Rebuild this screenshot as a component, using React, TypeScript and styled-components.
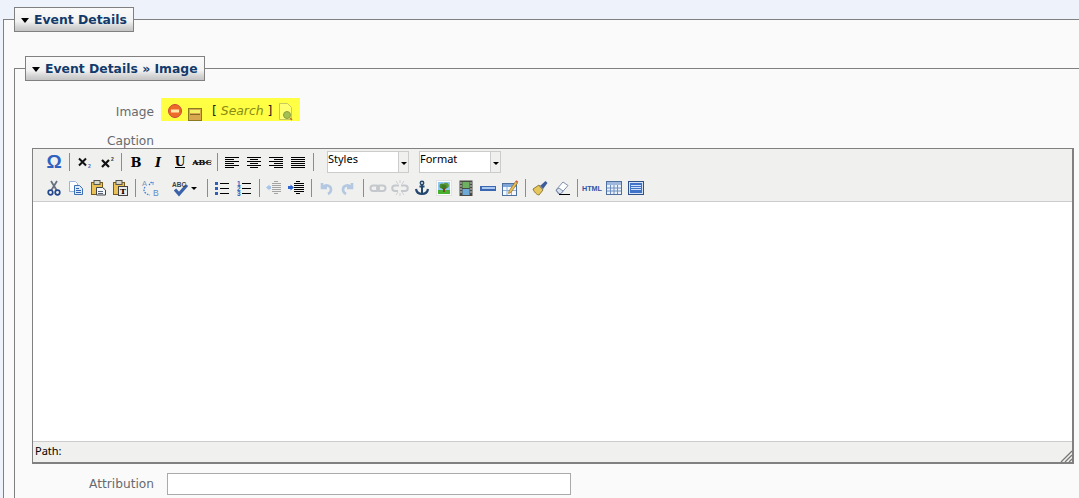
import React from "react";
import styled, { createGlobalStyle } from "styled-components";

const GlobalStyle = createGlobalStyle`
    html, body {
        margin: 0;
        padding: 0;
        background: #eef3fb;
    }
    #root {
        height: 498px;
        overflow: hidden;
    }
`;

const Page = styled.div`
    padding: 7px 0 0 3px;
    font-family: "DejaVu Sans", Verdana, sans-serif;
`;

const Section = styled.fieldset<{ $inner?: boolean }>`
    margin: ${(p) => (p.$inner ? "24px -20px 0 0" : "0 -20px 0 0")};
    padding: 0 0 30px 10px;
    border: 1px solid #808080;
    background: #fafafa;
    min-width: 0;
`;

const Legend = styled.legend`
    box-sizing: border-box;
    height: 25px;
    padding: 1px 6px 0;
    display: flex;
    align-items: center;
    gap: 5px;
    border: 1px solid #808080;
    background: linear-gradient(#fafafa 0, #f2f2f2 58%, #d4d4d4 82%, #c4c4c4 100%);
    color: #123a6b;
    font-size: 12.4px;
    font-weight: bold;
    line-height: 1;
`;

const Arrow = styled.span`
    width: 0;
    height: 0;
    margin-top: 1px;
    border-left: 4.5px solid transparent;
    border-right: 4.5px solid transparent;
    border-top: 5px solid #000;
`;

const Row = styled.div<{ $top?: number; $gap?: number }>`
    display: flex;
    align-items: center;
    gap: ${(p) => p.$gap ?? 7}px;
    margin-top: ${(p) => p.$top ?? 0}px;
`;

const Label = styled.label<{ $drop?: number }>`
    width: 129px;
    padding-top: ${(p) => p.$drop ?? 0}px;
    text-align: right;
    color: #666a70;
    font-size: 12.2px;
    line-height: 14px;
`;

const Highlight = styled.div`
    width: 139px;
    height: 23px;
    display: flex;
    align-items: center;
    background: #ffff44;
`;

const RemoveIcon = styled.span`
    display: flex;
    margin: 2px 0 0 7px;
`;

const BrowseIcon = styled.span`
    display: flex;
    margin: 9px 0 0 6px;
`;

const SearchLink = styled.span`
    margin: 2px 6px 0 10px;
    color: #222;
    font-size: 12.4px;
    white-space: pre;
    em {
        color: #8a8a14;
    }
`;

const DocIcon = styled.span`
    display: flex;
    margin-top: 3px;
`;

const Editor = styled.div`
    box-sizing: border-box;
    width: 1042px;
    height: 316px;
    margin: 0 0 0 7px;
    display: flex;
    flex-direction: column;
    border: 1px solid #808080;
    border-bottom-width: 2px;
    border-right-width: 2px;
    background: #f0f0ee;
`;

const Toolbar = styled.div`
    height: 52px;
    padding-left: 10px;
    border-bottom: 1px solid #ccc;
`;

const ToolRow = styled.div`
    height: 26px;
    display: flex;
    align-items: center;
`;

const ToolButton = styled.span<{ $wide?: boolean }>`
    flex: none;
    width: ${(p) => (p.$wide ? 42 : 22)}px;
    height: 22px;
    display: flex;
    align-items: center;
    justify-content: ${(p) => (p.$wide ? "flex-start" : "center")};
    padding-left: ${(p) => (p.$wide ? 11 : 0)}px;
    box-sizing: border-box;
    gap: 3px;
`;

const Separator = styled.span`
    flex: none;
    width: 1px;
    height: 18px;
    margin: 0 3px 0 4px;
    background: #8c8c8c;
`;

const Select = styled.div`
    flex: none;
    box-sizing: border-box;
    width: 82px;
    height: 22px;
    display: flex;
    margin-left: 10px;
    border: 1px solid #ccc;
    background: #fff;
    color: #000;
    font-family: "Noto Sans", sans-serif;
    font-size: 11px;
    line-height: 14px;
`;

const SelectText = styled.span`
    flex: 1;
`;

const SelectArrow = styled.span`
    width: 9px;
    display: flex;
    align-items: center;
    justify-content: center;
    background: #f0f0ee;
    border-left: 1px solid #ccc;
    &::after {
        content: "";
        border-left: 3px solid transparent;
        border-right: 3px solid transparent;
        border-top: 3px solid #000;
        margin-top: 2px;
    }
`;

const SplitArrow = styled.span`
    border-left: 3px solid transparent;
    border-right: 3px solid transparent;
    border-top: 3px solid #000;
`;

const EditArea = styled.div`
    flex: 1;
    background: #fff;
`;

const StatusBar = styled.div`
    position: relative;
    height: 20px;
    padding-left: 2px;
    border-top: 1px solid #ccc;
    color: #000;
    font-family: "Noto Sans", sans-serif;
    font-size: 11px;
    line-height: 18px;
`;

const Grip = styled.svg`
    position: absolute;
    right: 0;
    bottom: 0;
`;

const TextInput = styled.input`
    box-sizing: border-box;
    width: 404px;
    height: 22px;
    padding: 0;
    border: 1px solid #aaa;
    background: #fff;
`;

const GlyphSvg = styled.svg`
    overflow: visible;
    display: block;
`;

const Glyph = ({ w = 16, h = 16, children }: { w?: number; h?: number; children: React.ReactNode }) => (
    <GlyphSvg width={w} height={h} viewBox={`0 0 ${w} ${h}`}>
        {children}
    </GlyphSvg>
);

const Lines = ({ rows, color = "#000", h = 1 }: { rows: [number, number, number][]; color?: string; h?: number }) => (
    <>
        {rows.map(([x, y, l], i) => (
            <rect key={i} x={x} y={y} width={l} height={h} fill={color} />
        ))}
    </>
);

const serif = "'DejaVu Serif', serif";
const sans = "'Liberation Sans', sans-serif";

const icons: Record<string, React.ReactNode> = {
    omega: (
        <text x="8" y="14" fontFamily={sans} fontSize="19" fontWeight="bold" fill="#2f62c0" textAnchor="middle">Ω</text>
    ),
    sub: (
        <>
            <path d="M3 4.500l7 7M10 4.500l-7 7" stroke="#111" strokeWidth="2" />
            <text x="12" y="14" fontFamily={sans} fontSize="5" fontWeight="bold" fill="#3a6fc0">2</text>
        </>
    ),
    sup: (
        <>
            <path d="M4 6l7 7M11 6l-7 7" stroke="#111" strokeWidth="2.200" />
            <text x="13" y="7" fontFamily={sans} fontSize="5" fontWeight="bold" fill="#333">2</text>
        </>
    ),
    bold: <text x="8" y="13" fontFamily={serif} fontSize="13" fontWeight="bold" textAnchor="middle">B</text>,
    italic: <text x="8" y="13" fontFamily={serif} fontSize="13" fontWeight="bold" fontStyle="italic" textAnchor="middle">I</text>,
    underline: (
        <>
            <text x="8" y="12" fontFamily={serif} fontSize="12" fontWeight="bold" textAnchor="middle">U</text>
            <rect x="3" y="13" width="10" height="1" />
        </>
    ),
    strike: (
        <>
            <text x="8" y="11" fontFamily={serif} fontSize="8" fontWeight="bold" textAnchor="middle">ABC</text>
            <rect x="-1" y="8" width="18" height="1" fill="#333" />
        </>
    ),
    left: <Lines rows={[[1, 3, 14], [1, 5, 9], [1, 7, 14], [1, 9, 9], [1, 11, 14], [1, 13, 9]]} />,
    center: <Lines rows={[[1, 3, 14], [4, 5, 8], [1, 7, 14], [4, 9, 8], [1, 11, 14], [4, 13, 8]]} />,
    right: <Lines rows={[[1, 3, 14], [6, 5, 9], [1, 7, 14], [6, 9, 9], [1, 11, 14], [6, 13, 9]]} />,
    justify: <Lines rows={[[1, 3, 14], [1, 5, 14], [1, 7, 14], [1, 9, 14], [1, 11, 14], [1, 13, 14]]} />,
    cut: (
        <>
            <path d="M5 1l5.500 9M11 1L5.500 10" stroke="#6a7280" strokeWidth="1.800" />
            <circle cx="4.500" cy="12.500" r="2.300" fill="none" stroke="#24488e" strokeWidth="1.700" />
            <circle cx="11.500" cy="12.500" r="2.300" fill="none" stroke="#24488e" strokeWidth="1.700" />
        </>
    ),
    copy: (
        <>
            <path d="M1.500 1.500h6l2 2v8h-8z" fill="#fff" stroke="#9db5dc" />
            <path d="M6.500 5.500h5l3 3v6h-8z" fill="#dceafb" stroke="#3c6fb4" />
            <Lines rows={[[8, 8, 3], [8, 10, 5], [8, 12, 5]]} color="#2f62b0" />
        </>
    ),
    paste: (
        <>
            <rect x="1.500" y="2.500" width="11" height="12" fill="#eac155" stroke="#7a5c18" />
            <rect x="4" y="0.500" width="6" height="4" fill="#d8d8c8" stroke="#555" />
            <path d="M6.500 7.500h6l3 2.500v5h-9z" fill="#f4f6fa" stroke="#444" />
            <Lines rows={[[8, 11, 5], [8, 13, 5]]} color="#567" />
        </>
    ),
    pasteText: (
        <>
            <rect x="1.500" y="2.500" width="11" height="12" fill="#eac155" stroke="#7a5c18" />
            <rect x="4" y="0.500" width="6" height="4" fill="#d8d8c8" stroke="#555" />
            <rect x="6.500" y="6.500" width="9" height="9" fill="#ececec" stroke="#444" />
            <text x="11" y="14" fontFamily={serif} fontSize="8" fontWeight="bold" textAnchor="middle">T</text>
        </>
    ),
    replace: (
        <>
            <path d="M3 7c-2 3-1 6 3 7.500l2 .5" fill="none" stroke="#3a78d8" strokeWidth="1.300" strokeDasharray="1.500 1.300" />
            <path d="M7 5l3-3.500M11 2v3" fill="none" stroke="#3a78d8" strokeWidth="1.300" strokeDasharray="1.500 1" />
            <text x="0" y="6" fontFamily={sans} fontSize="7.500" fill="#8094b0">A</text>
            <text x="11" y="16" fontFamily={sans} fontSize="8.500" fill="#5e8ad0">B</text>
        </>
    ),
    spell: (
        <>
            <path d="M3 9.500l4 4.500 8-9" fill="none" stroke="#3b62a8" strokeWidth="3.200" />
            <text x="0" y="6.500" fontFamily={sans} fontSize="6.500" fontWeight="bold" fill="#3c4048">ABC</text>
        </>
    ),
    bullets: (
        <>
            <rect x="1" y="2" width="3" height="3" fill="#2f5fb8" />
            <rect x="1" y="7" width="3" height="3" fill="#2f5fb8" />
            <rect x="1" y="12" width="3" height="3" fill="#2f5fb8" />
            <Lines rows={[[6, 3, 9], [6, 8, 9], [6, 13, 9]]} />
        </>
    ),
    numbers: (
        <>
            <text x="1" y="6" fontFamily={sans} fontSize="6.500" fontWeight="bold" fill="#2f5fb8">1</text>
            <text x="1" y="11" fontFamily={sans} fontSize="6.500" fontWeight="bold" fill="#2f5fb8">2</text>
            <text x="1" y="16" fontFamily={sans} fontSize="6.500" fontWeight="bold" fill="#2f5fb8">3</text>
            <Lines rows={[[6, 3, 9], [6, 8, 9], [6, 13, 9]]} />
        </>
    ),
    outdent: (
        <>
            <Lines rows={[[6, 3, 9], [6, 5, 9], [6, 7, 9], [6, 9, 9], [6, 11, 9], [8, 13, 4], [8, 1, 4]]} color="#a4a4a4" />
            <path d="M0 7.500l3.500-3v1.500H5v3H3.500v1.500z" fill="#a8c4e8" />
        </>
    ),
    indent: (
        <>
            <Lines rows={[[6, 3, 10], [6, 5, 10], [6, 7, 10], [6, 9, 10], [6, 11, 10], [8, 13, 4], [8, 1, 4]]} />
            <path d="M6 7.500l-3.500-3v1.500H0v3h2.500v1.500z" fill="#2f66d0" />
        </>
    ),
    undo: <path d="M4 3v5h5M4.500 7.500C7 4 13 5 13 9.500c0 2-1 3.500-3 4.500" fill="none" stroke="#b4c8e2" strokeWidth="2.600" />,
    redo: <path d="M12 3v5H7M11.500 7.500C9 4 3 5 3 9.500c0 2 1 3.500 3 4.500" fill="none" stroke="#b4c8e2" strokeWidth="2.600" />,
    link: (
        <>
            <rect x="0.500" y="5.500" width="8.500" height="5.500" rx="2.700" fill="none" stroke="#c4c8cc" strokeWidth="2" />
            <rect x="7" y="5.500" width="8.500" height="5.500" rx="2.700" fill="none" stroke="#c4c8cc" strokeWidth="2" />
        </>
    ),
    unlink: (
        <>
            <path d="M7 5.500H3a2.700 2.700 0 0 0 0 5.500h3M9 5.500h4a2.700 2.700 0 0 1 0 5.500h-4" fill="none" stroke="#c4c8cc" strokeWidth="2" />
            <path d="M8 0v3M4 1l2 3M12 1l-2 3M8 16v-3M4 15l2-3M12 15l-2-3" stroke="#cdd0d4" />
        </>
    ),
    anchor: (
        <>
            <circle cx="8" cy="3" r="1.700" fill="none" stroke="#24476e" strokeWidth="1.500" />
            <path d="M8 5v9M5.500 6.500h5" stroke="#24476e" strokeWidth="2" />
            <path d="M2 9c.5 3 3 5 6 5s5.500-2 6-5" fill="none" stroke="#24476e" strokeWidth="2.200" />
        </>
    ),
    image: (
        <>
            <rect x="0.500" y="0.500" width="15" height="15" fill="#fff" stroke="#e2e2e2" />
            <rect x="2" y="2" width="12" height="9" fill="#8ec8f0" />
            <rect x="2" y="10" width="12" height="4" fill="#48b030" />
            <circle cx="6" cy="6" r="2.500" fill="#4a8c2c" />
            <circle cx="10" cy="5.500" r="2.800" fill="#5c9a34" />
            <circle cx="8" cy="7" r="2.500" fill="#3c7c28" />
            <rect x="7" y="8" width="2" height="4" fill="#7a4a20" />
        </>
    ),
    film: (
        <>
            <rect x="1.500" y="0.500" width="13" height="15.500" fill="#4a4a44" />
            <rect x="4.500" y="2" width="7" height="6" fill="#6cb060" />
            <rect x="4.500" y="9" width="7" height="6" fill="#6ca8d8" />
            <path d="M2 3h2M2 6h2M2 9h2M2 12h2M12 3h2M12 6h2M12 9h2M12 12h2" stroke="#ccc" />
        </>
    ),
    rule: (
        <>
            <rect x="0" y="6" width="16" height="5" fill="#3c66b0" />
            <rect x="2" y="7" width="13" height="2" fill="#a8c8f0" />
        </>
    ),
    tableEdit: (
        <>
            <rect x="0.500" y="3.500" width="14" height="12" fill="#f4f8fd" stroke="#4f6f9f" />
            <rect x="1" y="4" width="13" height="3" fill="#7fa4d8" />
            <path d="M5 7v8M9.500 7v8M1 10.500h13" stroke="#8eb0dc" />
            <path d="M7 11l6.500-9.500 2 1.500-6.500 9.500-2.500 1z" fill="#e8c050" stroke="#8a6020" strokeWidth=".6" />
            <path d="M13.500 1.500l.8-1.200 2 1.400-.8 1.300z" fill="#d85a3a" />
        </>
    ),
    brush: (
        <>
            <path d="M1 9l6-4 4 5-4 5c-2 0-5-3-6-6z" fill="#e6c75c" stroke="#7a6420" strokeWidth=".8" />
            <path d="M8 6l5.500-5 2 2-4.500 6z" fill="#3c5a9c" />
            <path d="M7.500 5.500l3.500 4" stroke="#888" strokeWidth="1.500" />
        </>
    ),
    eraser: (
        <>
            <path d="M2 10l7-8 5 3.500-7 8H4z" fill="#fff" stroke="#7f8fa8" />
            <path d="M2 10l3 3.500h2l2-2.500-4-3z" fill="#d8e2f0" stroke="#7f8fa8" />
            <rect x="5" y="14" width="11" height="1" fill="#000" />
        </>
    ),
    html: <text x="8" y="11" fontFamily={sans} fontSize="7.200" fontWeight="bold" fill="#2f55a4" textAnchor="middle">HTML</text>,
    table: (
        <>
            <rect x="0.500" y="1.500" width="15" height="13" fill="#eaf1fb" stroke="#4f6f9f" />
            <rect x="1" y="2" width="14" height="3" fill="#9db8dc" />
            <path d="M4.500 5v9M8 5v9M11.500 5v9M1 8h14M1 11h14" stroke="#6f90c0" />
        </>
    ),
    blocks: (
        <>
            <rect x="0.500" y="1.500" width="15" height="13" fill="#d4e2f4" stroke="#30508a" />
            <rect x="2" y="3" width="12" height="10" fill="#3f74c8" />
            <Lines rows={[[3, 5, 10], [3, 7, 10], [3, 9, 10]]} color="#cfe0f8" />
        </>
    ),
    remove: (
        <>
            <circle cx="7" cy="7" r="6.500" fill="#ee6a2a" stroke="#c84a3a" />
            <rect x="3" y="5.500" width="8" height="3" fill="#ffe9a8" />
        </>
    ),
    browse: (
        <>
            <rect x="0.500" y="0.500" width="13" height="12" fill="#d8a850" stroke="#8a7a20" />
            <rect x="2" y="2" width="10" height="3" fill="#f0f060" />
            <rect x="2" y="6" width="10" height="1" fill="#8a6a20" />
        </>
    ),
    searchDoc: (
        <>
            <path d="M1.500 .500h8l4 4v12h-12z" fill="#ffff70" stroke="#c8c860" />
            <circle cx="9" cy="12" r="3.500" fill="#a4c050" stroke="#8aa040" />
            <path d="M12 15l2 2" stroke="#c07030" strokeWidth="1.500" />
        </>
    ),
};

type Tool = string | "|";

const rowOne: Tool[] = ["omega", "|", "sub", "sup", "|", "bold", "italic", "underline", "strike", "|", "left", "center", "right", "justify", "|"];
const rowTwoStart: Tool[] = ["cut", "copy", "paste", "pasteText", "|", "replace"];
const rowTwoEnd: Tool[] = [
    "|", "bullets", "numbers", "|", "outdent", "indent", "|", "undo", "redo", "|", "link", "unlink", "anchor", "image", "film", "rule", "tableEdit", "|", "brush", "eraser", "|", "html", "table", "blocks",
];

const Tools = ({ items }: { items: Tool[] }) => (
    <>
        {items.map((t, i) =>
            t === "|" ? (
                <Separator key={i} />
            ) : (
                <ToolButton key={i}>
                    <Glyph>{icons[t]}</Glyph>
                </ToolButton>
            ),
        )}
    </>
);

export default function App() {
    return (
        <Page>
            <GlobalStyle />
            <Section>
                <Legend>
                    <Arrow />
                    Event Details
                </Legend>
                <Section $inner>
                    <Legend>
                        <Arrow />
                        Event Details » Image
                    </Legend>
                    <Row $top={17}>
                        <Label $drop={4}>Image</Label>
                        <Highlight>
                            <RemoveIcon>
                                <Glyph w={14} h={14}>{icons.remove}</Glyph>
                            </RemoveIcon>
                            <BrowseIcon>
                                <Glyph w={14} h={13}>{icons.browse}</Glyph>
                            </BrowseIcon>
                            <SearchLink>
                                [ <em>Search</em> ]
                            </SearchLink>
                            <DocIcon>
                                <Glyph w={16} h={17}>{icons.searchDoc}</Glyph>
                            </DocIcon>
                        </Highlight>
                    </Row>
                    <Row $top={13}>
                        <Label>Caption</Label>
                    </Row>
                    <Editor>
                        <Toolbar>
                            <ToolRow>
                                <Tools items={rowOne} />
                                <Select>
                                    <SelectText>Styles</SelectText>
                                    <SelectArrow />
                                </Select>
                                <Select>
                                    <SelectText>Format</SelectText>
                                    <SelectArrow />
                                </Select>
                            </ToolRow>
                            <ToolRow>
                                <Tools items={rowTwoStart} />
                                <ToolButton $wide>
                                    <Glyph>{icons.spell}</Glyph>
                                    <SplitArrow />
                                </ToolButton>
                                <Tools items={rowTwoEnd} />
                            </ToolRow>
                        </Toolbar>
                        <EditArea />
                        <StatusBar>
                            Path:
                            <Grip width="12" height="12" viewBox="0 0 12 12">
                                <path d="M1 12L12 1M5 12l7-7M9 12l3-3" stroke="#777" strokeWidth="1.300" />
                            </Grip>
                        </StatusBar>
                    </Editor>
                    <Row $top={9} $gap={13}>
                        <Label>Attribution</Label>
                        <TextInput />
                    </Row>
                </Section>
            </Section>
        </Page>
    );
}
